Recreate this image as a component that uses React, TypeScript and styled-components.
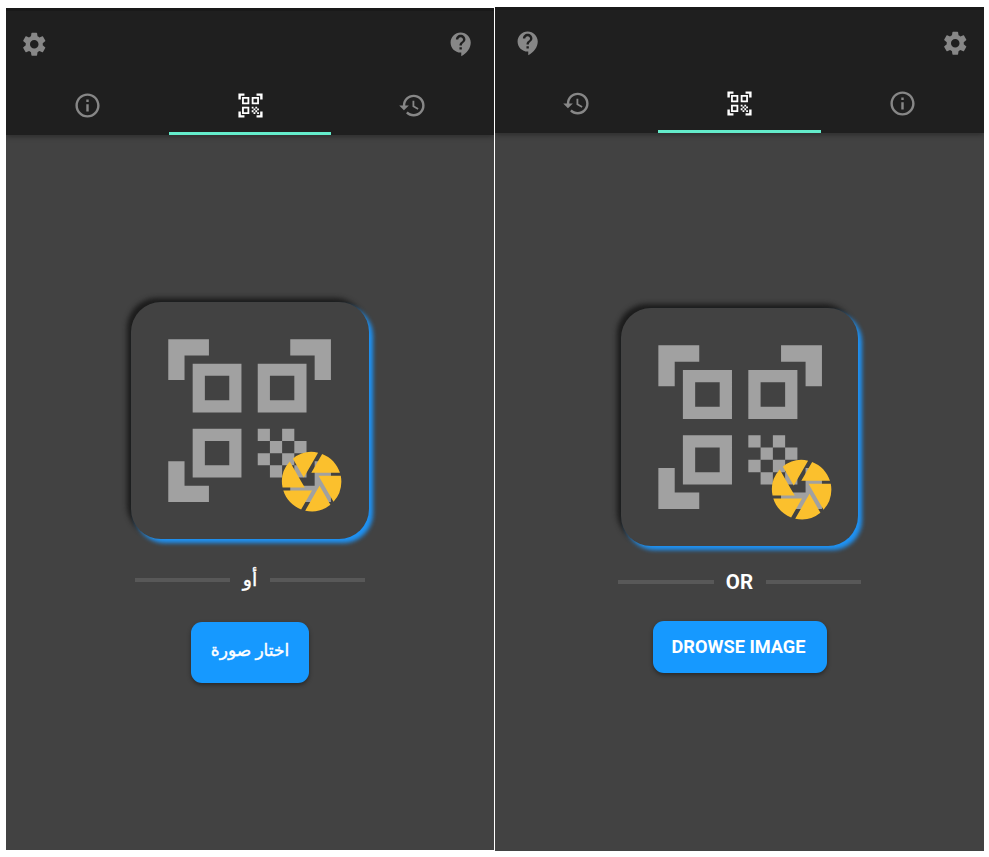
import React from "react";
import styled, { createGlobalStyle, css } from "styled-components";
import {
  MdCamera,
  MdContactSupport,
  MdHistory,
  MdInfoOutline,
  MdQrCodeScanner,
  MdSettings,
} from "react-icons/md";

const GlobalStyle = createGlobalStyle`
  *, *::before, *::after { box-sizing: border-box; }
  body {
    margin: 0;
    background: #fff;
    font-family: Roboto, "DejaVu Sans", sans-serif;
  }
  svg { display: block; flex: none; }
`;

type Locale = "ar" | "en";

const Page = styled.main`
  display: flex;
  align-items: flex-start;
  gap: 1px;
  width: 989px;
  height: 857px;
  padding: 7px 5px 6px 6px;
  overflow: hidden;
`;

const Screen = styled.section<{ $locale: Locale }>`
  display: flex;
  flex-direction: column;
  background: #424242;
  ${({ $locale }) =>
    $locale === "ar"
      ? css`
          width: 488px;
          height: 842px;
          margin-top: 1px;
        `
      : css`
          width: 489px;
          height: 844px;
        `}
`;

const Header = styled.header<{ $locale: Locale }>`
  display: flex;
  flex-direction: column;
  height: ${({ $locale }) => ($locale === "ar" ? 127 : 126)}px;
  background: #1f1f1f;
  border-top: 3px solid #191919;
  box-shadow: 0 2px 5px rgba(0, 0, 0, 0.32);
  clip-path: inset(0 0 -10px 0);
`;

const Toolbar = styled.div<{ $locale: Locale }>`
  display: flex;
  align-items: center;
  justify-content: space-between;
  height: 67px;
  padding-block: 0 ${({ $locale }) => ($locale === "ar" ? 0 : 1)}px;
  padding-inline: 19px 14.3px;
  color: #878787;
`;

const IconButton = styled.button`
  padding: 0;
  border: 0;
  background: none;
  color: inherit;
  font-size: 28.5px;
`;

const Tabs = styled.nav`
  display: grid;
  grid-template-columns: repeat(3, 1fr);
  flex: 1;
`;

const Tab = styled.button<{ $active?: boolean }>`
  display: flex;
  align-items: center;
  justify-content: center;
  padding: 0;
  border: 0;
  border-bottom: 3px solid ${({ $active }) => ($active ? "#64eccb" : "transparent")};
  background: none;
  color: ${({ $active }) => ($active ? "#fff" : "#878787")};
  font-size: 29px;
`;

const Content = styled.div<{ $locale: Locale }>`
  display: flex;
  flex-direction: column;
  align-items: center;
  padding-top: ${({ $locale }) => ($locale === "ar" ? 167 : 175.3)}px;
`;

const ScanCard = styled.button<{ $locale: Locale }>`
  position: relative;
  display: flex;
  align-items: center;
  justify-content: center;
  width: 237.4px;
  height: ${({ $locale }) => ($locale === "ar" ? 236.5 : 237.7)}px;
  padding: ${({ $locale }) => ($locale === "ar" ? "0" : "1px 0 0 2px")};
  border: 0;
  border-radius: 30px;
  background: #424242;
  color: #a1a1a1;
  font-size: ${({ $locale }) => ($locale === "ar" ? 195.2 : 196.3)}px;
  box-shadow: 4px 4px 4px #1e93f6, -4px -4px 5px #1c1c1c;
`;

const Shutter = styled.span<{ $locale: Locale }>`
  position: absolute;
  color: #fbc02d;
  font-size: 71.3px;
  ${({ $locale }) =>
    $locale === "ar"
      ? css`
          left: 145px;
          top: 144px;
        `
      : css`
          left: 144.8px;
          top: 145.3px;
        `}
`;

const Separator = styled.div<{ $locale: Locale }>`
  display: grid;
  grid-template-columns: 95.3px ${({ $locale }) => ($locale === "ar" ? 40 : 52)}px 95.3px;
  align-items: center;
  height: 30px;
  margin-top: ${({ $locale }) => ($locale === "ar" ? 26.5 : 21.5)}px;
  color: #fff;
  font-size: ${({ $locale }) => ($locale === "ar" ? 19 : 20.5)}px;
  font-weight: ${({ $locale }) => ($locale === "ar" ? 400 : 700)};
  -webkit-text-stroke: ${({ $locale }) => ($locale === "ar" ? "0.4px #fff" : "0")};
  line-height: 30px;
  text-align: center;
`;

const Rule = styled.i`
  height: 4px;
  background: #585858;
`;

const BrowseButton = styled.button<{ $locale: Locale }>`
  border: 0;
  border-radius: 11px;
  background: #1699ff;
  color: #fff;
  padding: 0;
  font-family: inherit;
  white-space: nowrap;
  box-shadow: 0 2px 4px rgba(0, 0, 0, 0.4);
  ${({ $locale }) =>
    $locale === "ar"
      ? css`
          width: 118.6px;
          height: 61.5px;
          margin-top: 26.7px;
          padding-bottom: 4px;
          font-size: 17px;
          font-weight: 400;
          -webkit-text-stroke: 0.4px #fff;
        `
      : css`
          width: 174px;
          height: 52.5px;
          margin-top: 23.5px;
          padding: 0 2px 1px 0;
          font-size: 18.2px;
          font-weight: 700;
        `}
`;

interface ScannerProps {
  locale: Locale;
  separator: string;
  action: string;
}

function ScannerScreen({ locale, separator, action }: ScannerProps) {
  return (
    <Screen $locale={locale} lang={locale} dir={locale === "ar" ? "rtl" : "ltr"}>
      <Header $locale={locale}>
        <Toolbar $locale={locale}>
          <IconButton><MdContactSupport /></IconButton>
          <IconButton><MdSettings /></IconButton>
        </Toolbar>
        <Tabs>
          <Tab><MdHistory /></Tab>
          <Tab $active><MdQrCodeScanner /></Tab>
          <Tab><MdInfoOutline /></Tab>
        </Tabs>
      </Header>
      <Content $locale={locale}>
        <ScanCard $locale={locale}>
          <MdQrCodeScanner />
          <Shutter $locale={locale}><MdCamera /></Shutter>
        </ScanCard>
        <Separator $locale={locale}>
          <Rule />
          <span>{separator}</span>
          <Rule />
        </Separator>
        <BrowseButton $locale={locale}>{action}</BrowseButton>
      </Content>
    </Screen>
  );
}

export default function App() {
  return (
    <>
      <GlobalStyle />
      <Page>
        <ScannerScreen locale="ar" separator="أو" action="اختار صورة" />
        <ScannerScreen locale="en" separator="OR" action="DROWSE IMAGE" />
      </Page>
    </>
  );
}
